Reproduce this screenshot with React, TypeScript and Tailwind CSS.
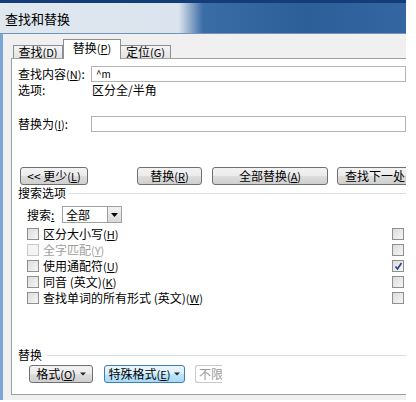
import React from "react";

const K = ({ c }: { c: string }) => (
  <span className="text-[11px]">
    (<span className="underline">{c}</span>)
  </span>
);

const Caret = () => (
  <svg width="6" height="4" viewBox="0 0 6 4" className="ml-[4px]">
    <path d="M0 0.5 H6 L3 3.5 Z" fill="#222" />
  </svg>
);

const Btn = ({
  children,
  className = "",
  focus = false,
}: {
  children: React.ReactNode;
  className?: string;
  focus?: boolean;
}) => (
  <div
    className={`h-[18px] shrink-0 flex items-center justify-center rounded-[3px] border text-[12px] leading-none text-black ${
      focus
        ? "border-[#3c7fb1] bg-[linear-gradient(to_bottom,#eaf6fd_0%,#d9f0fc_50%,#bee6fd_51%,#a7d9f5_100%)]"
        : "border-[#707070] bg-[linear-gradient(to_bottom,#f2f2f2_0%,#ebebeb_50%,#dddddd_51%,#cfcfcf_100%)]"
    } ${className}`}
  >
    {children}
  </div>
);

const Check = ({ checked = false, dim = false }: { checked?: boolean; dim?: boolean }) => (
  <div
    className={`w-[12px] h-[12px] shrink-0 border flex items-center justify-center ${
      dim ? "border-[#c8c8c8] bg-[#f4f4f4]" : "border-[#8f8f8f] bg-[linear-gradient(135deg,#dcdcdc,#f6f6f6)]"
    }`}
  >
    {checked && (
      <svg width="9" height="9" viewBox="0 0 9 9">
        <path d="M1.5 4.5 L3.5 7 L7.5 1" stroke="#22418a" strokeWidth="1.6" fill="none" />
      </svg>
    )}
  </div>
);

const rows = [
  { label: <>区分大小写<K c="H" /></>, right: false },
  { label: <>全字匹配<K c="Y" /></>, right: false, dim: true },
  { label: <>使用通配符<K c="U" /></>, right: true },
  { label: <>同音 (英文)<K c="K" /></>, right: false },
  { label: <>查找单词的所有形式 (英文)<K c="W" /></>, right: false },
];

export default function App() {
  return (
    <div className="w-[416px] h-[402px] bg-white overflow-hidden font-['Noto_Sans_CJK_SC','Liberation_Sans',sans-serif] text-[12px] text-black">
      <div className="w-[406px] h-[400px] flex flex-col bg-[#f0f0f0] overflow-hidden">
        {/* title bar */}
        <div className="h-[34px] shrink-0 border-t-[3px] border-[#143d78] border-b border-b-[#7393b8] bg-[linear-gradient(to_right,#dfe7ef_0%,#dbe4ee_44%,#3a6ca6_50%,#2c5e98_75%,#3467a2_100%)] flex items-center pl-[5px]">
          <span className="text-[13px] leading-none">查找和替换</span>
        </div>

        <div className="flex-1 flex flex-col border-l-[3px] border-[#79a6d6] pl-[8px]">
          {/* tabs */}
          <div className="h-[24px] shrink-0 flex items-end pl-[2px]">
            <div className="h-[13px] w-[50px] border border-b-0 border-[#8c8e94] bg-[linear-gradient(to_bottom,#f4f4f4,#e3e3e3)] flex items-center justify-center leading-none">
              查找<K c="D" />
            </div>
            <div className="h-[20px] w-[58px] border border-b-0 border-[#8c8e94] bg-white flex items-center justify-center leading-none -mb-px relative z-10 pb-[3px]">
              替换<K c="P" />
            </div>
            <div className="h-[13px] w-[50px] border border-b-0 border-l-0 border-[#8c8e94] bg-[linear-gradient(to_bottom,#f4f4f4,#e3e3e3)] flex items-center justify-center leading-none">
              定位<K c="G" />
            </div>
          </div>

          {/* panel */}
          <div className="bg-white border border-r-0 border-[#a0a0a0] pl-[6px] pt-[7px] pb-[11px] flex flex-col">
            <div className="h-[16px] flex items-center">
              <div className="w-[73px] shrink-0">
                查找内容<K c="N" />:
              </div>
              <div className="flex-1 h-[16px] border border-[#b4b4b4] flex items-center pl-[4px] text-[10px] leading-none">
                ^m
              </div>
            </div>
            <div className="h-[16px] flex items-center">
              <div className="w-[74px] shrink-0">选项:</div>
              <div>区分全/半角</div>
            </div>
            <div className="h-[16px] mt-[18px] flex items-center">
              <div className="w-[73px] shrink-0">
                替换为<K c="I" />:
              </div>
              <div className="flex-1 h-[16px] border border-[#b4b4b4]" />
            </div>

            {/* action buttons */}
            <div className="h-[18px] mt-[35px] flex items-center">
              <Btn className="ml-[2px] w-[68px]">
                &lt;&lt; 更少<K c="L" />
              </Btn>
              <Btn className="ml-[49px] w-[65px]">
                替换<K c="R" />
              </Btn>
              <Btn className="ml-[10px] w-[116px]">
                全部替换<K c="A" />
              </Btn>
              <Btn className="ml-[9px] w-[90px] justify-start pl-[7px] overflow-hidden whitespace-nowrap">
                查找下一处<K c="F" />
              </Btn>
            </div>

            {/* search options */}
            <div className="h-[16px] flex items-center">
              <span>搜索选项</span>
              <div className="flex-1 h-px bg-[#d5dfe5] ml-[3px]" />
            </div>
            <div className="h-[17px] mt-[5px] flex items-center">
              <div className="ml-[9px] w-[35px] shrink-0">
                搜索<span className="underline">:</span>
              </div>
              <div className="w-[60px] h-[17px] border border-[#a0a0a0] flex items-center">
                <span className="flex-1 pl-[3px] leading-none">全部</span>
                <div className="w-[14px] h-[15px] border-l border-[#a0a0a0] bg-[linear-gradient(to_bottom,#f2f2f2,#d8d8d8)] flex items-center justify-center">
                  <svg width="7" height="4" viewBox="0 0 7 4">
                    <path d="M0 0 H7 L3.5 4 Z" fill="#000" />
                  </svg>
                </div>
              </div>
            </div>
            <div className="mt-[3px] flex flex-col">
              {rows.map((r, i) => (
                <div key={i} className="h-[16px] flex items-center">
                  <div className="ml-[9px]">
                    <Check dim={r.dim} />
                  </div>
                  <span className={`ml-[4px] leading-none ${r.dim ? "text-[#a0a0a0]" : ""}`}>{r.label}</span>
                  <div className="ml-auto mr-[2px]">
                    <Check checked={r.right} />
                  </div>
                </div>
              ))}
            </div>

            {/* replace group */}
            <div className="h-[16px] mt-[41px] flex items-center">
              <span>替换</span>
              <div className="flex-1 h-px bg-[#d5dfe5] ml-[5px]" />
            </div>
            <div className="h-[18px] mt-[2px] flex items-center">
              <Btn className="ml-[11px] w-[64px]">
                格式<K c="O" />
                <Caret />
              </Btn>
              <Btn focus className="ml-[11px] w-[81px]">
                特殊格式<K c="E" />
                <Caret />
              </Btn>
              <div className="ml-[10px] w-[27px] h-[18px] border border-r-0 border-[#c9c9c9] rounded-l-[3px] flex items-center pl-[3px] text-[#9a9a9a] overflow-hidden whitespace-nowrap">
                不限
              </div>
            </div>
          </div>
        </div>
      </div>
    </div>
  );
}
